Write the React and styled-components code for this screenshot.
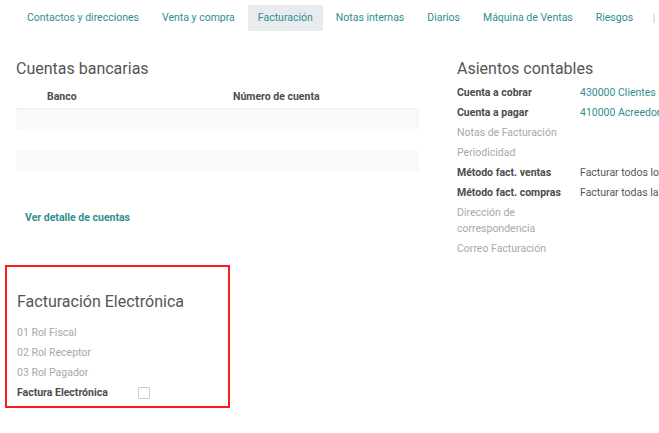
import React from "react";
import styled, { createGlobalStyle } from "styled-components";

const GlobalStyle = createGlobalStyle`
  html, body {
    margin: 0;
    padding: 0;
    background: #fff;
    overflow: hidden;
  }
  body {
    font-family: Roboto, "Noto Sans", "Liberation Sans", sans-serif;
    color: #4c4c4c;
  }
`;

const Page = styled.div`
  width: 659px;
  height: 433px;
  overflow: hidden;
  white-space: nowrap;
`;

const TabBar = styled.ul`
  display: flex;
  align-items: center;
  margin: 5px 0 0 0;
  padding: 0 0 0 17px;
  list-style: none;
  height: 26px;
`;

const TabItem = styled.li`
  padding: 0 10px;
  margin-right: 3px;
  height: 26px;
  line-height: 26px;
  font-size: 10.5px;
  color: #2f8e8f;
  background: ${(p) => (p.active ? "#e9ecef" : "transparent")};
  flex-shrink: 0;
`;

const TabEdge = styled.span`
  display: block;
  width: 2px;
  height: 9px;
  margin-left: 7px;
  background: #f6dccb;
  flex-shrink: 0;
`;

const Columns = styled.div`
  display: grid;
  grid-template-columns: 403px 1fr;
  column-gap: 38px;
  margin-top: 28px;
  padding-left: 16px;
`;

const Column = styled.div`
  display: flex;
  flex-direction: column;
  min-width: 0;
`;

const Heading = styled.h2`
  margin: 0;
  font-size: 16px;
  line-height: 20px;
  font-weight: 400;
  color: #555;
`;

const Table = styled.div`
  margin-top: 7px;
`;

const HeaderRow = styled.div`
  display: grid;
  grid-template-columns: 186px 1fr;
  height: 22px;
  line-height: 22px;
  font-size: 10.5px;
  font-weight: 700;
  color: #4c4c4c;
  padding-left: 31px;
`;

const BodyRow = styled.div`
  height: 21px;
  background: ${(p) => (p.striped ? "#f9f9f9" : "#fff")};
  box-shadow: ${(p) => (p.first ? "inset 0 1px 2px rgba(0,0,0,0.05)" : "none")};
`;

const DetailLink = styled.a`
  display: block;
  margin: 39px 0 0 9px;
  font-size: 10.5px;
  line-height: 16px;
  font-weight: 700;
  color: #2f8e8f;
  text-decoration: none;
`;

const Highlight = styled.section`
  margin: 39px 0 0 -11px;
  width: 211px;
  border: 2px solid #ff1a1a;
  padding: 25px 0 3px 10px;
`;

const FieldList = styled.div`
  margin-top: ${(p) => p.gap || 3}px;
`;

const Field = styled.div`
  display: grid;
  grid-template-columns: ${(p) => p.labelWidth || 123}px 1fr;
  align-items: center;
  padding: 2px 0;
  font-size: 10.5px;
  line-height: 16px;
`;

const Label = styled.span`
  font-weight: ${(p) => (p.empty ? 400 : 700)};
  color: ${(p) => (p.empty ? "#a8a8a8" : "#4c4c4c")};
  white-space: normal;
  padding-right: 8px;
`;

const Value = styled.span`
  color: ${(p) => (p.link ? "#2f8e8f" : "#555")};
  overflow: hidden;
`;

const CheckBox = styled.span`
  display: block;
  width: 10px;
  height: 10px;
  border: 1px solid #d0d0d0;
  border-radius: 1px;
  background: #fff;
`;

const tabs = [
  "Contactos y direcciones",
  "Venta y compra",
  "Facturación",
  "Notas internas",
  "Diarios",
  "Máquina de Ventas",
  "Riesgos",
];

const accounting = [
  { label: "Cuenta a cobrar", value: "430000 Clientes (euros)", link: true },
  { label: "Cuenta a pagar", value: "410000 Acreedores (euros)", link: true },
  { label: "Notas de Facturación", empty: true },
  { label: "Periodicidad", empty: true },
  { label: "Método fact. ventas", value: "Facturar todos los pedidos" },
  { label: "Método fact. compras", value: "Facturar todas las compras" },
  { label: "Dirección de correspondencia", empty: true },
  { label: "Correo Facturación", empty: true },
];

const roles = ["01 Rol Fiscal", "02 Rol Receptor", "03 Rol Pagador"];

export default function App() {
  return (
    <Page>
      <GlobalStyle />
      <TabBar>
        {tabs.map((t) => (
          <TabItem key={t} active={t === "Facturación"}>
            {t}
          </TabItem>
        ))}
        <TabEdge />
      </TabBar>

      <Columns>
        <Column>
          <Heading>Cuentas bancarias</Heading>
          <Table>
            <HeaderRow>
              <span>Banco</span>
              <span>Número de cuenta</span>
            </HeaderRow>
            <BodyRow striped first />
            <BodyRow />
            <BodyRow striped />
          </Table>
          <DetailLink href="#">Ver detalle de cuentas</DetailLink>

          <Highlight>
            <Heading>Facturación Electrónica</Heading>
            <FieldList gap={11}>
              {roles.map((r) => (
                <Field key={r} labelWidth={121}>
                  <Label empty>{r}</Label>
                  <span />
                </Field>
              ))}
              <Field labelWidth={121}>
                <Label>Factura Electrónica</Label>
                <CheckBox />
              </Field>
            </FieldList>
          </Highlight>
        </Column>

        <Column>
          <Heading>Asientos contables</Heading>
          <FieldList gap={4}>
            {accounting.map((f) => (
              <Field key={f.label}>
                <Label empty={f.empty}>{f.label}</Label>
                <Value link={f.link}>{f.value}</Value>
              </Field>
            ))}
          </FieldList>
        </Column>
      </Columns>
    </Page>
  );
}
